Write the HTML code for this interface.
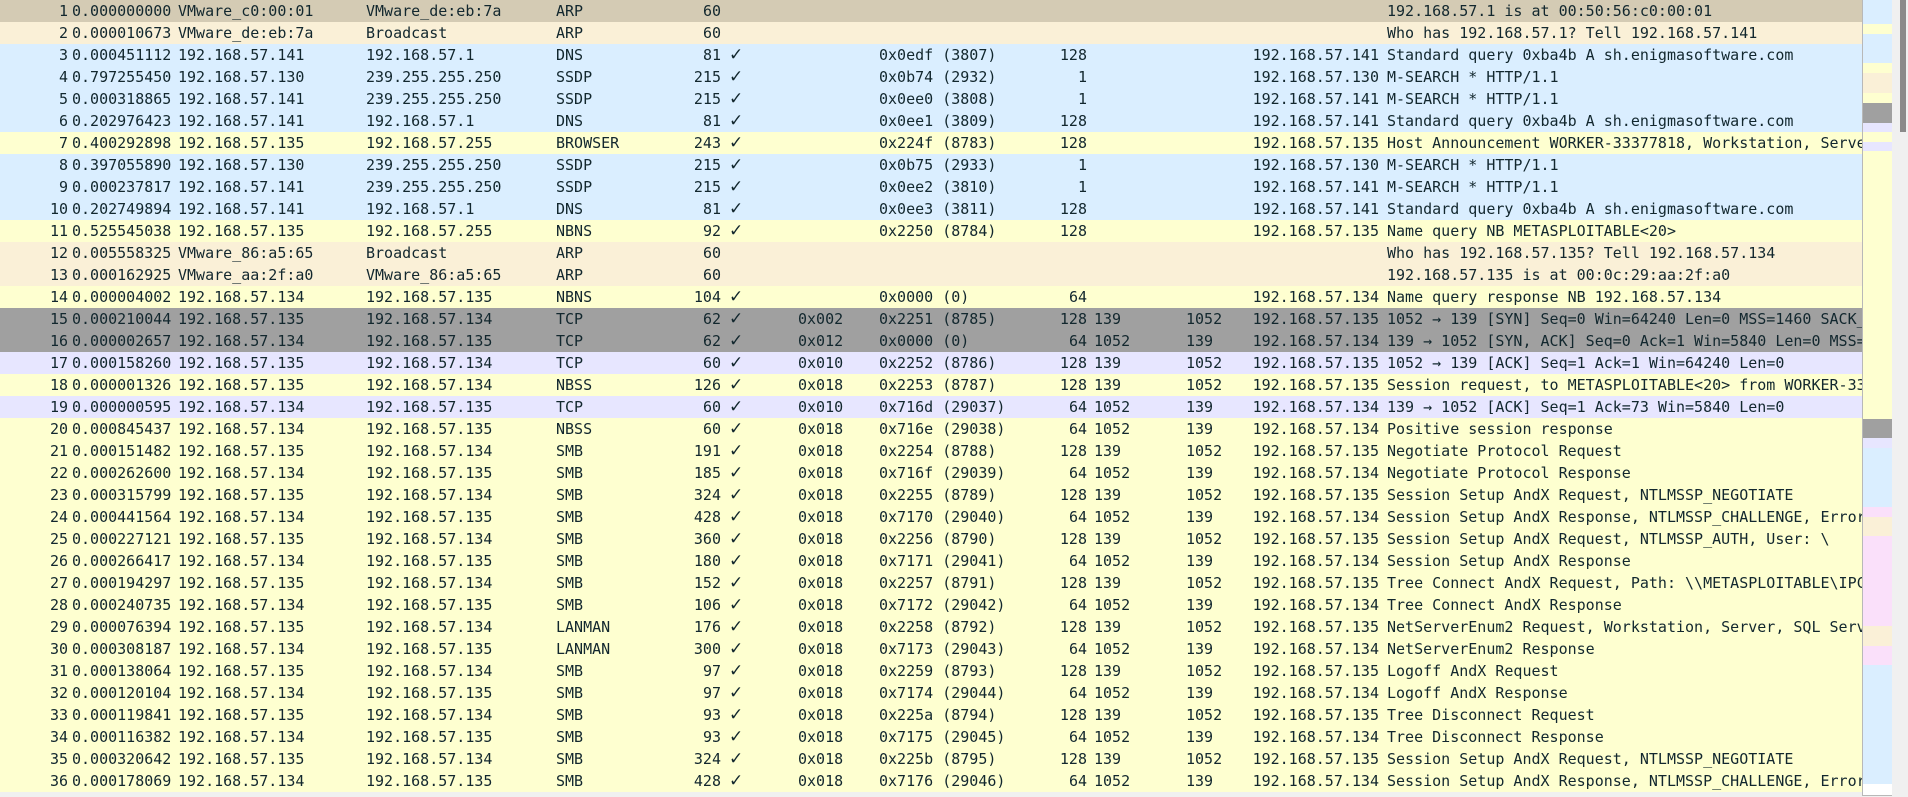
<!DOCTYPE html>
<html><head><meta charset="utf-8"><style>
html,body{margin:0;padding:0;width:1908px;height:797px;overflow:hidden;background:#f0f0f0;}
#list{position:absolute;left:0;top:0;width:1862px;height:792px;overflow:hidden;}
.r{position:relative;height:22px;line-height:22px;font-family:"DejaVu Sans Mono","Liberation Mono",monospace;font-size:15px;color:#12272e;white-space:pre;}
.r span{position:absolute;top:0;}
.n{left:0;width:68px;text-align:right}
.t{left:72px}.s{left:178px}.d{left:366px}.p{left:556px}
.l{left:650px;width:71px;text-align:right}
.r span.c{left:729px;font-family:"DejaVu Sans",sans-serif;font-size:17px}
.f{left:798px}.i{left:879px}
.ttl{left:1030px;width:57px;text-align:right}
.sp{left:1094px}.dp{left:1186px}
.s2{left:1230px;width:149px;text-align:right}
.info{left:1387px;width:475px;overflow:hidden}
.a1{background:#d4cbb4}.a{background:#faf0d7}.u{background:#daeeff}.y{background:#feffd0}.g{background:#a0a0a0}.v{background:#e7e6ff}
#mm{position:absolute;left:1862px;top:0;width:29px;height:795px;border:1px solid #b8b8b8;border-top:none;background:#fff;overflow:hidden}
#mm div{position:absolute;left:0;width:29px}
#sb{position:absolute;left:1892px;top:0;width:16px;height:797px;background:#f0f0f0}
#th{position:absolute;left:1900px;top:0;width:6px;height:132px;background:#8a8a8a}
</style></head><body>
<div id="list">
<div class="r a1"><span class="n">1</span><span class="t">0.000000000</span><span class="s">VMware_c0:00:01</span><span class="d">VMware_de:eb:7a</span><span class="p">ARP</span><span class="l">60</span><span class="info">192.168.57.1 is at 00:50:56:c0:00:01</span></div>
<div class="r a"><span class="n">2</span><span class="t">0.000010673</span><span class="s">VMware_de:eb:7a</span><span class="d">Broadcast</span><span class="p">ARP</span><span class="l">60</span><span class="info">Who has 192.168.57.1? Tell 192.168.57.141</span></div>
<div class="r u"><span class="n">3</span><span class="t">0.000451112</span><span class="s">192.168.57.141</span><span class="d">192.168.57.1</span><span class="p">DNS</span><span class="l">81</span><span class="c">✓</span><span class="i">0x0edf (3807)</span><span class="ttl">128</span><span class="s2">192.168.57.141</span><span class="info">Standard query 0xba4b A sh.enigmasoftware.com</span></div>
<div class="r u"><span class="n">4</span><span class="t">0.797255450</span><span class="s">192.168.57.130</span><span class="d">239.255.255.250</span><span class="p">SSDP</span><span class="l">215</span><span class="c">✓</span><span class="i">0x0b74 (2932)</span><span class="ttl">1</span><span class="s2">192.168.57.130</span><span class="info">M-SEARCH * HTTP/1.1</span></div>
<div class="r u"><span class="n">5</span><span class="t">0.000318865</span><span class="s">192.168.57.141</span><span class="d">239.255.255.250</span><span class="p">SSDP</span><span class="l">215</span><span class="c">✓</span><span class="i">0x0ee0 (3808)</span><span class="ttl">1</span><span class="s2">192.168.57.141</span><span class="info">M-SEARCH * HTTP/1.1</span></div>
<div class="r u"><span class="n">6</span><span class="t">0.202976423</span><span class="s">192.168.57.141</span><span class="d">192.168.57.1</span><span class="p">DNS</span><span class="l">81</span><span class="c">✓</span><span class="i">0x0ee1 (3809)</span><span class="ttl">128</span><span class="s2">192.168.57.141</span><span class="info">Standard query 0xba4b A sh.enigmasoftware.com</span></div>
<div class="r y"><span class="n">7</span><span class="t">0.400292898</span><span class="s">192.168.57.135</span><span class="d">192.168.57.255</span><span class="p">BROWSER</span><span class="l">243</span><span class="c">✓</span><span class="i">0x224f (8783)</span><span class="ttl">128</span><span class="s2">192.168.57.135</span><span class="info">Host Announcement WORKER-33377818, Workstation, Server</span></div>
<div class="r u"><span class="n">8</span><span class="t">0.397055890</span><span class="s">192.168.57.130</span><span class="d">239.255.255.250</span><span class="p">SSDP</span><span class="l">215</span><span class="c">✓</span><span class="i">0x0b75 (2933)</span><span class="ttl">1</span><span class="s2">192.168.57.130</span><span class="info">M-SEARCH * HTTP/1.1</span></div>
<div class="r u"><span class="n">9</span><span class="t">0.000237817</span><span class="s">192.168.57.141</span><span class="d">239.255.255.250</span><span class="p">SSDP</span><span class="l">215</span><span class="c">✓</span><span class="i">0x0ee2 (3810)</span><span class="ttl">1</span><span class="s2">192.168.57.141</span><span class="info">M-SEARCH * HTTP/1.1</span></div>
<div class="r u"><span class="n">10</span><span class="t">0.202749894</span><span class="s">192.168.57.141</span><span class="d">192.168.57.1</span><span class="p">DNS</span><span class="l">81</span><span class="c">✓</span><span class="i">0x0ee3 (3811)</span><span class="ttl">128</span><span class="s2">192.168.57.141</span><span class="info">Standard query 0xba4b A sh.enigmasoftware.com</span></div>
<div class="r y"><span class="n">11</span><span class="t">0.525545038</span><span class="s">192.168.57.135</span><span class="d">192.168.57.255</span><span class="p">NBNS</span><span class="l">92</span><span class="c">✓</span><span class="i">0x2250 (8784)</span><span class="ttl">128</span><span class="s2">192.168.57.135</span><span class="info">Name query NB METASPLOITABLE&lt;20&gt;</span></div>
<div class="r a"><span class="n">12</span><span class="t">0.005558325</span><span class="s">VMware_86:a5:65</span><span class="d">Broadcast</span><span class="p">ARP</span><span class="l">60</span><span class="info">Who has 192.168.57.135? Tell 192.168.57.134</span></div>
<div class="r a"><span class="n">13</span><span class="t">0.000162925</span><span class="s">VMware_aa:2f:a0</span><span class="d">VMware_86:a5:65</span><span class="p">ARP</span><span class="l">60</span><span class="info">192.168.57.135 is at 00:0c:29:aa:2f:a0</span></div>
<div class="r y"><span class="n">14</span><span class="t">0.000004002</span><span class="s">192.168.57.134</span><span class="d">192.168.57.135</span><span class="p">NBNS</span><span class="l">104</span><span class="c">✓</span><span class="i">0x0000 (0)</span><span class="ttl">64</span><span class="s2">192.168.57.134</span><span class="info">Name query response NB 192.168.57.134</span></div>
<div class="r g"><span class="n">15</span><span class="t">0.000210044</span><span class="s">192.168.57.135</span><span class="d">192.168.57.134</span><span class="p">TCP</span><span class="l">62</span><span class="c">✓</span><span class="f">0x002</span><span class="i">0x2251 (8785)</span><span class="ttl">128</span><span class="sp">139</span><span class="dp">1052</span><span class="s2">192.168.57.135</span><span class="info">1052 → 139 [SYN] Seq=0 Win=64240 Len=0 MSS=1460 SACK_PERM</span></div>
<div class="r g"><span class="n">16</span><span class="t">0.000002657</span><span class="s">192.168.57.134</span><span class="d">192.168.57.135</span><span class="p">TCP</span><span class="l">62</span><span class="c">✓</span><span class="f">0x012</span><span class="i">0x0000 (0)</span><span class="ttl">64</span><span class="sp">1052</span><span class="dp">139</span><span class="s2">192.168.57.134</span><span class="info">139 → 1052 [SYN, ACK] Seq=0 Ack=1 Win=5840 Len=0 MSS=1460</span></div>
<div class="r v"><span class="n">17</span><span class="t">0.000158260</span><span class="s">192.168.57.135</span><span class="d">192.168.57.134</span><span class="p">TCP</span><span class="l">60</span><span class="c">✓</span><span class="f">0x010</span><span class="i">0x2252 (8786)</span><span class="ttl">128</span><span class="sp">139</span><span class="dp">1052</span><span class="s2">192.168.57.135</span><span class="info">1052 → 139 [ACK] Seq=1 Ack=1 Win=64240 Len=0</span></div>
<div class="r y"><span class="n">18</span><span class="t">0.000001326</span><span class="s">192.168.57.135</span><span class="d">192.168.57.134</span><span class="p">NBSS</span><span class="l">126</span><span class="c">✓</span><span class="f">0x018</span><span class="i">0x2253 (8787)</span><span class="ttl">128</span><span class="sp">139</span><span class="dp">1052</span><span class="s2">192.168.57.135</span><span class="info">Session request, to METASPLOITABLE&lt;20&gt; from WORKER-33377818</span></div>
<div class="r v"><span class="n">19</span><span class="t">0.000000595</span><span class="s">192.168.57.134</span><span class="d">192.168.57.135</span><span class="p">TCP</span><span class="l">60</span><span class="c">✓</span><span class="f">0x010</span><span class="i">0x716d (29037)</span><span class="ttl">64</span><span class="sp">1052</span><span class="dp">139</span><span class="s2">192.168.57.134</span><span class="info">139 → 1052 [ACK] Seq=1 Ack=73 Win=5840 Len=0</span></div>
<div class="r y"><span class="n">20</span><span class="t">0.000845437</span><span class="s">192.168.57.134</span><span class="d">192.168.57.135</span><span class="p">NBSS</span><span class="l">60</span><span class="c">✓</span><span class="f">0x018</span><span class="i">0x716e (29038)</span><span class="ttl">64</span><span class="sp">1052</span><span class="dp">139</span><span class="s2">192.168.57.134</span><span class="info">Positive session response</span></div>
<div class="r y"><span class="n">21</span><span class="t">0.000151482</span><span class="s">192.168.57.135</span><span class="d">192.168.57.134</span><span class="p">SMB</span><span class="l">191</span><span class="c">✓</span><span class="f">0x018</span><span class="i">0x2254 (8788)</span><span class="ttl">128</span><span class="sp">139</span><span class="dp">1052</span><span class="s2">192.168.57.135</span><span class="info">Negotiate Protocol Request</span></div>
<div class="r y"><span class="n">22</span><span class="t">0.000262600</span><span class="s">192.168.57.134</span><span class="d">192.168.57.135</span><span class="p">SMB</span><span class="l">185</span><span class="c">✓</span><span class="f">0x018</span><span class="i">0x716f (29039)</span><span class="ttl">64</span><span class="sp">1052</span><span class="dp">139</span><span class="s2">192.168.57.134</span><span class="info">Negotiate Protocol Response</span></div>
<div class="r y"><span class="n">23</span><span class="t">0.000315799</span><span class="s">192.168.57.135</span><span class="d">192.168.57.134</span><span class="p">SMB</span><span class="l">324</span><span class="c">✓</span><span class="f">0x018</span><span class="i">0x2255 (8789)</span><span class="ttl">128</span><span class="sp">139</span><span class="dp">1052</span><span class="s2">192.168.57.135</span><span class="info">Session Setup AndX Request, NTLMSSP_NEGOTIATE</span></div>
<div class="r y"><span class="n">24</span><span class="t">0.000441564</span><span class="s">192.168.57.134</span><span class="d">192.168.57.135</span><span class="p">SMB</span><span class="l">428</span><span class="c">✓</span><span class="f">0x018</span><span class="i">0x7170 (29040)</span><span class="ttl">64</span><span class="sp">1052</span><span class="dp">139</span><span class="s2">192.168.57.134</span><span class="info">Session Setup AndX Response, NTLMSSP_CHALLENGE, Error</span></div>
<div class="r y"><span class="n">25</span><span class="t">0.000227121</span><span class="s">192.168.57.135</span><span class="d">192.168.57.134</span><span class="p">SMB</span><span class="l">360</span><span class="c">✓</span><span class="f">0x018</span><span class="i">0x2256 (8790)</span><span class="ttl">128</span><span class="sp">139</span><span class="dp">1052</span><span class="s2">192.168.57.135</span><span class="info">Session Setup AndX Request, NTLMSSP_AUTH, User: \</span></div>
<div class="r y"><span class="n">26</span><span class="t">0.000266417</span><span class="s">192.168.57.134</span><span class="d">192.168.57.135</span><span class="p">SMB</span><span class="l">180</span><span class="c">✓</span><span class="f">0x018</span><span class="i">0x7171 (29041)</span><span class="ttl">64</span><span class="sp">1052</span><span class="dp">139</span><span class="s2">192.168.57.134</span><span class="info">Session Setup AndX Response</span></div>
<div class="r y"><span class="n">27</span><span class="t">0.000194297</span><span class="s">192.168.57.135</span><span class="d">192.168.57.134</span><span class="p">SMB</span><span class="l">152</span><span class="c">✓</span><span class="f">0x018</span><span class="i">0x2257 (8791)</span><span class="ttl">128</span><span class="sp">139</span><span class="dp">1052</span><span class="s2">192.168.57.135</span><span class="info">Tree Connect AndX Request, Path: \\METASPLOITABLE\IPC$</span></div>
<div class="r y"><span class="n">28</span><span class="t">0.000240735</span><span class="s">192.168.57.134</span><span class="d">192.168.57.135</span><span class="p">SMB</span><span class="l">106</span><span class="c">✓</span><span class="f">0x018</span><span class="i">0x7172 (29042)</span><span class="ttl">64</span><span class="sp">1052</span><span class="dp">139</span><span class="s2">192.168.57.134</span><span class="info">Tree Connect AndX Response</span></div>
<div class="r y"><span class="n">29</span><span class="t">0.000076394</span><span class="s">192.168.57.135</span><span class="d">192.168.57.134</span><span class="p">LANMAN</span><span class="l">176</span><span class="c">✓</span><span class="f">0x018</span><span class="i">0x2258 (8792)</span><span class="ttl">128</span><span class="sp">139</span><span class="dp">1052</span><span class="s2">192.168.57.135</span><span class="info">NetServerEnum2 Request, Workstation, Server, SQL Server</span></div>
<div class="r y"><span class="n">30</span><span class="t">0.000308187</span><span class="s">192.168.57.134</span><span class="d">192.168.57.135</span><span class="p">LANMAN</span><span class="l">300</span><span class="c">✓</span><span class="f">0x018</span><span class="i">0x7173 (29043)</span><span class="ttl">64</span><span class="sp">1052</span><span class="dp">139</span><span class="s2">192.168.57.134</span><span class="info">NetServerEnum2 Response</span></div>
<div class="r y"><span class="n">31</span><span class="t">0.000138064</span><span class="s">192.168.57.135</span><span class="d">192.168.57.134</span><span class="p">SMB</span><span class="l">97</span><span class="c">✓</span><span class="f">0x018</span><span class="i">0x2259 (8793)</span><span class="ttl">128</span><span class="sp">139</span><span class="dp">1052</span><span class="s2">192.168.57.135</span><span class="info">Logoff AndX Request</span></div>
<div class="r y"><span class="n">32</span><span class="t">0.000120104</span><span class="s">192.168.57.134</span><span class="d">192.168.57.135</span><span class="p">SMB</span><span class="l">97</span><span class="c">✓</span><span class="f">0x018</span><span class="i">0x7174 (29044)</span><span class="ttl">64</span><span class="sp">1052</span><span class="dp">139</span><span class="s2">192.168.57.134</span><span class="info">Logoff AndX Response</span></div>
<div class="r y"><span class="n">33</span><span class="t">0.000119841</span><span class="s">192.168.57.135</span><span class="d">192.168.57.134</span><span class="p">SMB</span><span class="l">93</span><span class="c">✓</span><span class="f">0x018</span><span class="i">0x225a (8794)</span><span class="ttl">128</span><span class="sp">139</span><span class="dp">1052</span><span class="s2">192.168.57.135</span><span class="info">Tree Disconnect Request</span></div>
<div class="r y"><span class="n">34</span><span class="t">0.000116382</span><span class="s">192.168.57.134</span><span class="d">192.168.57.135</span><span class="p">SMB</span><span class="l">93</span><span class="c">✓</span><span class="f">0x018</span><span class="i">0x7175 (29045)</span><span class="ttl">64</span><span class="sp">1052</span><span class="dp">139</span><span class="s2">192.168.57.134</span><span class="info">Tree Disconnect Response</span></div>
<div class="r y"><span class="n">35</span><span class="t">0.000320642</span><span class="s">192.168.57.135</span><span class="d">192.168.57.134</span><span class="p">SMB</span><span class="l">324</span><span class="c">✓</span><span class="f">0x018</span><span class="i">0x225b (8795)</span><span class="ttl">128</span><span class="sp">139</span><span class="dp">1052</span><span class="s2">192.168.57.135</span><span class="info">Session Setup AndX Request, NTLMSSP_NEGOTIATE</span></div>
<div class="r y"><span class="n">36</span><span class="t">0.000178069</span><span class="s">192.168.57.134</span><span class="d">192.168.57.135</span><span class="p">SMB</span><span class="l">428</span><span class="c">✓</span><span class="f">0x018</span><span class="i">0x7176 (29046)</span><span class="ttl">64</span><span class="sp">1052</span><span class="dp">139</span><span class="s2">192.168.57.134</span><span class="info">Session Setup AndX Response, NTLMSSP_CHALLENGE, Error</span></div>
</div>
<div id="mm">
<div style="top:0;height:24px;background:#daeeff"></div>
<div style="top:24px;height:10px;background:#feffd0"></div>
<div style="top:34px;height:29px;background:#daeeff"></div>
<div style="top:63px;height:10px;background:#feffd0"></div>
<div style="top:73px;height:20px;background:#faf0d7"></div>
<div style="top:93px;height:10px;background:#feffd0"></div>
<div style="top:103px;height:20px;background:#a0a0a0"></div>
<div style="top:123px;height:9px;background:#e7e6ff"></div>
<div style="top:132px;height:10px;background:#feffd0"></div>
<div style="top:142px;height:9px;background:#e7e6ff"></div>
<div style="top:151px;height:268px;background:#feffd0"></div>
<div style="top:419px;height:19px;background:#a0a0a0"></div>
<div style="top:438px;height:10px;background:#e7e6ff"></div>
<div style="top:448px;height:59px;background:#daeeff"></div>
<div style="top:507px;height:10px;background:#fae0fa"></div>
<div style="top:517px;height:19px;background:#faf0d7"></div>
<div style="top:536px;height:90px;background:#fae0fa"></div>
<div style="top:626px;height:20px;background:#faf0d7"></div>
<div style="top:646px;height:19px;background:#fae0fa"></div>
<div style="top:665px;height:119px;background:#daeeff"></div>
</div>
<div id="sb"></div><div id="th"></div>
</body></html>
